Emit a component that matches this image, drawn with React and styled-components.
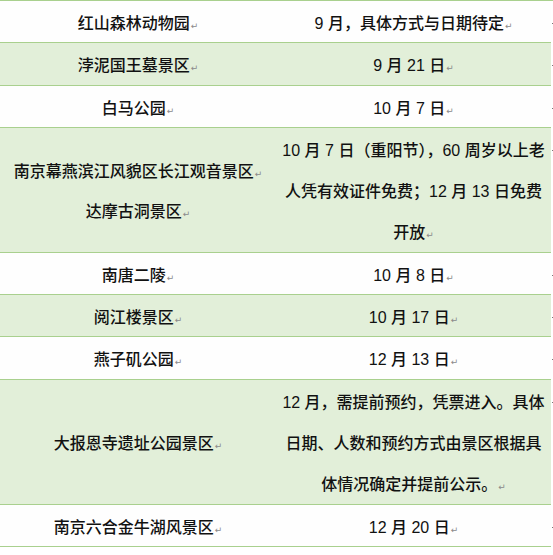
import React from "react";
import styled, { createGlobalStyle } from "styled-components";

const GlobalStyle = createGlobalStyle`
  html, body {
    margin: 0;
    padding: 0;
    background: #ffffff;
  }
  body {
    font-family: "Liberation Sans", "Noto Sans CJK SC", sans-serif;
    color: #111;
  }
`;

const Table = styled.div`
  width: 553px;
  border-top: 1px solid #a9d08e;
  display: flex;
  flex-direction: column;
`;

const Row = styled.div`
  display: grid;
  grid-template-columns: 276px 275px 2px;
  background: ${(p) => (p.$shade ? "#e2efd9" : "#fefefe")};
  border-bottom: 1px solid #a9d08e;
  width: 551px;
`;

const Cell = styled.div`
  display: flex;
  flex-direction: column;
  justify-content: center;
  align-items: center;
  text-align: center;
  padding: 0 8px;
  font-size: 16px;
  font-weight: 500;
  white-space: nowrap;
`;

const Line = styled.div`
  height: ${(p) => (p.$tight ? "40px" : "41.3px")};
  line-height: ${(p) => (p.$tight ? "40px" : "41.3px")};
  padding-top: 2px;
  box-sizing: border-box;
`;

const Mark = styled.span`
  font-family: "DejaVu Sans", sans-serif;
  font-size: 9px;
  font-weight: 400;
  line-height: 1;
  color: #8a8a8a;
  margin-left: 1px;
`;

const RowEnd = styled.span`
  align-self: start;
  margin-top: 22px;
  margin-left: 1px;
  width: 2px;
  height: 1px;
  background: #777;
`;

const rows = [
  { place: ["红山森林动物园"], date: ["9 月，具体方式与日期待定"] },
  { place: ["浡泥国王墓景区"], date: ["9 月 21 日"], shade: true },
  { place: ["白马公园"], date: ["10 月 7 日"] },
  {
    place: ["南京幕燕滨江风貌区长江观音景区", "达摩古洞景区"],
    date: ["10 月 7 日（重阳节），60 周岁以上老\n人凭有效证件免费；12 月 13 日免费\n开放"],
    shade: true,
  },
  { place: ["南唐二陵"], date: ["10 月 8 日"] },
  { place: ["阅江楼景区"], date: ["10 月 17 日"], shade: true },
  { place: ["燕子矶公园"], date: ["12 月 13 日"] },
  {
    place: ["大报恩寺遗址公园景区"],
    date: ["12 月，需提前预约，凭票进入。具体\n日期、人数和预约方式由景区根据具\n体情况确定并提前公示。"],
    shade: true,
  },
  { place: ["南京六合金牛湖风景区"], date: ["12 月 20 日"] },
];

const Paragraphs = ({ items }) => (
  <>
    {items.map((text, i) => {
      const lines = text.split("\n");
      return lines.map((line, j) => (
        <Line key={`${i}-${j}`} $tight={items.length > 1}>
          {line}
          {j === lines.length - 1 && <Mark>↵</Mark>}
        </Line>
      ));
    })}
  </>
);

const App = () => {
  return (
    <>
      <GlobalStyle />
      <Table>
        {rows.map((r, i) => (
          <Row key={i} $shade={r.shade}>
            <Cell>
              <Paragraphs items={r.place} />
            </Cell>
            <Cell>
              <Paragraphs items={r.date} />
            </Cell>
            <RowEnd />
          </Row>
        ))}
      </Table>
    </>
  );
};

export default App;
